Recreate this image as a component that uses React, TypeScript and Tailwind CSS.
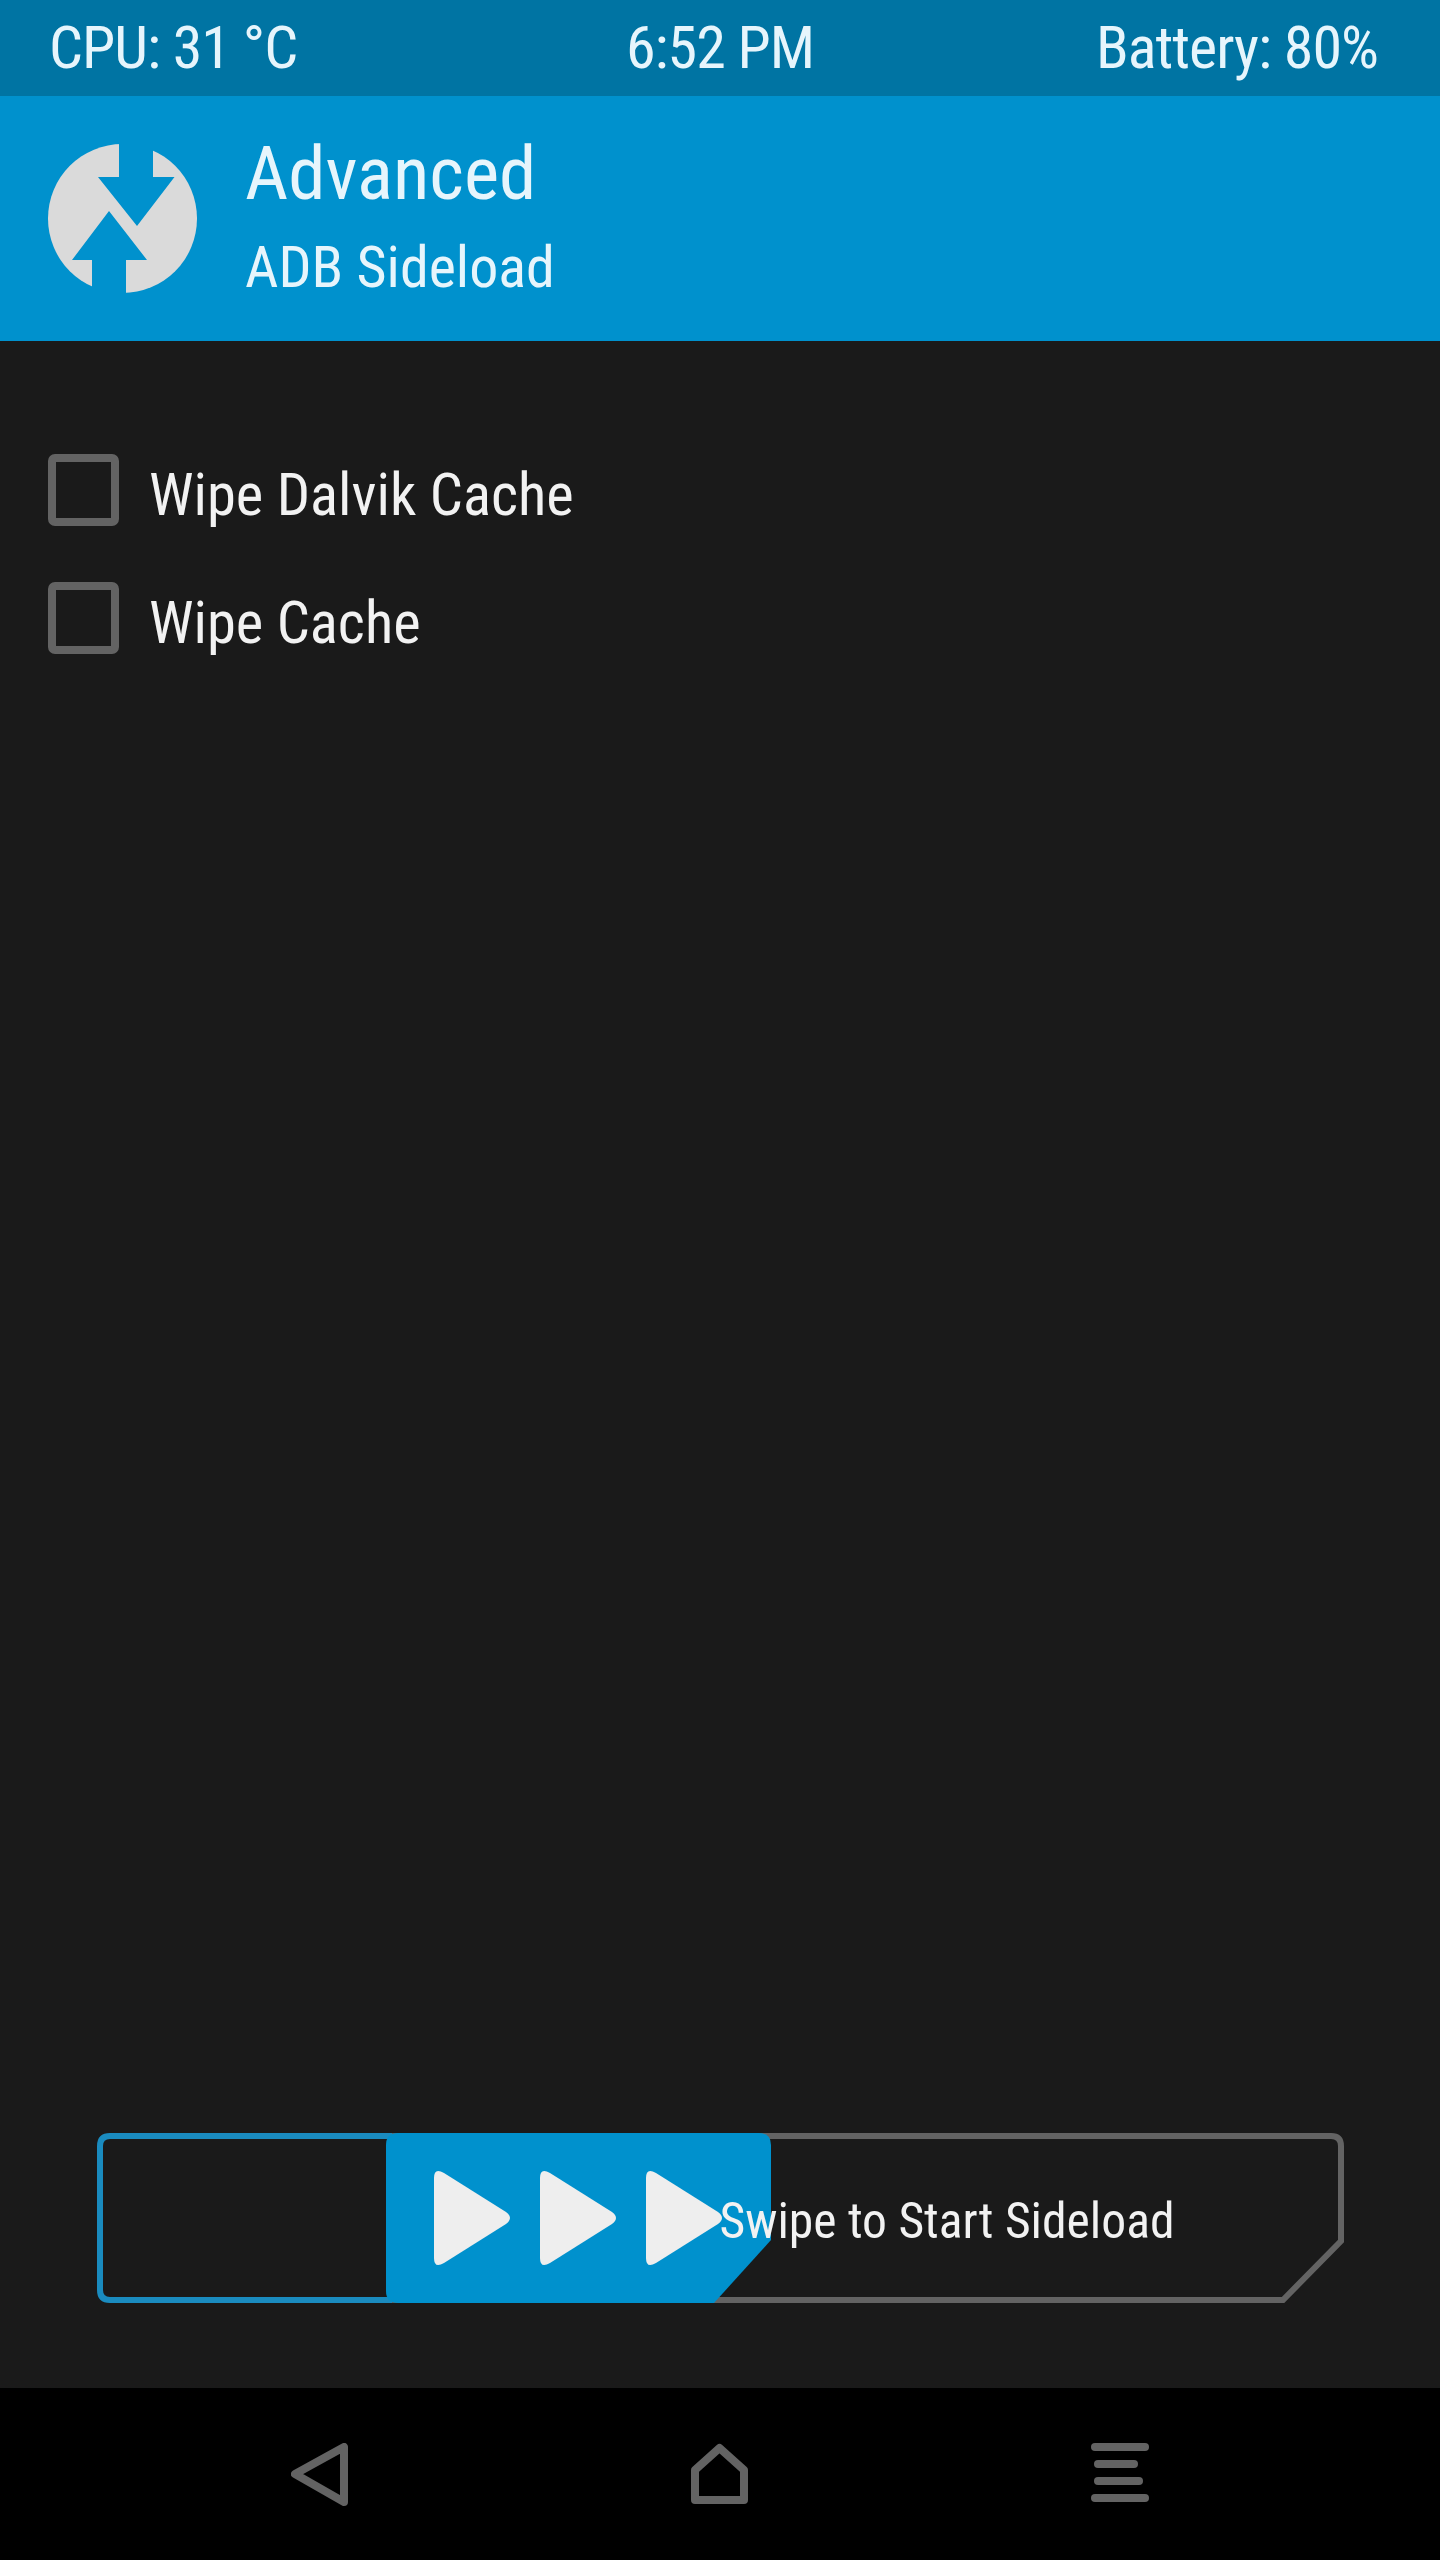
const font = "font-['Roboto',sans-serif]";

function Logo() {
  return (
    <svg width="149" height="149" viewBox="0 0 149 149" className="shrink-0">
      <circle cx="74.5" cy="74.5" r="74.5" fill="#dadada" />
      <path d="M71 -1V33H50L89 82L126.5 33H105V-1Z" fill="#0091cd" />
      <path d="M44 150V116H24L61 67L99 116H78V150Z" fill="#0091cd" />
    </svg>
  );
}

function Checkbox({ label }: { label: string }) {
  return (
    <div className="flex items-center gap-[30px]">
      <div className="w-[71px] h-[72px] rounded-[7px] border-[8px] border-[#636363]" />
      <span className="text-[58.5px] leading-[72px] text-[#f2f2f2] mt-[9px]">{label}</span>
    </div>
  );
}

function Track() {
  return (
    <svg width="1247" height="170" viewBox="0 0 1247 170" className="absolute inset-0" fill="none" strokeWidth="6">
      <path d="M295 3H13Q3 3 3 13V157Q3 167 13 167H295" stroke="#1a8bbf" />
      <path d="M295 3H1234Q1244 3 1244 13V108L1186 167H295" stroke="#636363" />
    </svg>
  );
}

function Thumb() {
  return (
    <svg width="385" height="170" viewBox="0 0 385 170" className="absolute left-[289.5px] top-0">
      <path d="M12 0H373Q385 0 385 12V107L328 170H12Q0 170 0 158V12Q0 0 12 0Z" fill="#0091cd" />
      <path d="M48 45Q48 34 58 40L120 79Q128 85 120 91L58 130Q48 136 48 125Z" fill="#eeeeee" />
      <path d="M154 45Q154 34 164 40L226 79Q234 85 226 91L164 130Q154 136 154 125Z" fill="#eeeeee" />
      <path d="M260 45Q260 34 270 40L332 79Q340 85 332 91L270 130Q260 136 260 125Z" fill="#eeeeee" />
    </svg>
  );
}

function NavIcons() {
  return (
    <div className="bg-black h-[172px] flex justify-center gap-[343px] pt-[55px]">
      <svg width="57" height="63" viewBox="0 0 57 63" fill="none" stroke="#636363" strokeWidth="8" strokeLinejoin="round">
        <path d="M53 4V59L4 31Z" />
      </svg>
      <svg width="57" height="63" viewBox="0 0 57 63" fill="none" stroke="#636363" strokeWidth="8" strokeLinejoin="round">
        <path d="M28.5 5L53 27V57H4V27Z" />
      </svg>
      <div className="w-[58px] flex flex-col gap-[9px]">
        <div className="h-[8px] w-[58px] rounded-full bg-[#636363]" />
        <div className="h-[8px] w-[44px] ml-[3px] rounded-full bg-[#636363]" />
        <div className="h-[8px] w-[49px] ml-[3px] rounded-full bg-[#636363]" />
        <div className="h-[8px] w-[58px] rounded-full bg-[#636363]" />
      </div>
    </div>
  );
}

export default function App() {
  return (
    <div className={`w-[1440px] h-[2560px] flex flex-col bg-[#1a1a1a] [font-stretch:75%] ${font}`}>
      <div className="h-[96px] bg-[#0074a3] grid grid-cols-[1fr_auto_1fr] items-center px-[49px] text-[60px] tracking-[-1px] text-[#e6f5fc]">
        <span>CPU: 31 °C</span>
        <span>6:52 PM</span>
        <span className="text-right pr-[13px]">Battery: 80%</span>
      </div>
      <div className="h-[245px] bg-[#0091cd] flex items-center pl-[48px] gap-[48px] text-[#e6f5fc]">
        <Logo />
        <div className="flex flex-col mb-[5px]">
          <span className="text-[75px] leading-[88px]">Advanced</span>
          <span className="text-[58px] leading-[72px] mt-[14px]">ADB Sideload</span>
        </div>
      </div>
      <div className="flex-1 flex flex-col">
        <div className="pt-[108.5px] pl-[48px] flex flex-col gap-[47px]">
          <Checkbox label="Wipe Dalvik Cache" />
          <Checkbox label="Wipe Cache" />
        </div>
        <div className="mt-auto mb-[85px] mx-auto w-[1247px] h-[170px] relative flex items-center pl-[623px]">
          <Track />
          <Thumb />
          <span className="relative text-[49.6px] text-[#f2f2f2] mt-[6px]">Swipe to Start Sideload</span>
        </div>
      </div>
      <NavIcons />
    </div>
  );
}
